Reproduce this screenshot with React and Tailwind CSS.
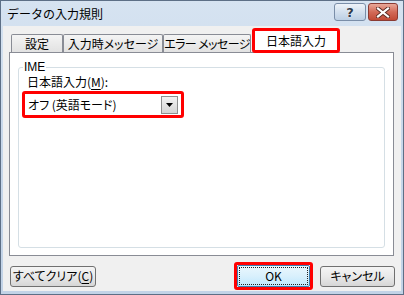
import React from "react";

const font = { fontFamily: '"Noto Sans CJK JP", "Noto Sans", sans-serif' };

function Tab({ w, children, extra = "" }) {
  return (
    <div
      className={`${w} h-[18px] border border-b-0 border-[#898c95] rounded-t-[2px] bg-gradient-to-b from-[#f4f4f4] to-[#e2e2e2] flex items-center justify-center text-[12px] leading-[14px] text-black whitespace-nowrap overflow-hidden [font-feature-settings:'palt'] ${extra}`}
    >
      {children}
    </div>
  );
}

function Btn({ w, children }) {
  return (
    <div
      className={`${w} h-[21px] border border-[#707070] rounded-[3px] bg-gradient-to-b from-[#f4f4f4] via-[#e9e9e9] to-[#d6d6d6] flex items-center justify-center text-[12px] leading-[14px] text-black whitespace-nowrap [font-feature-settings:'palt']`}
    >
      {children}
    </div>
  );
}

export default function App() {
  return (
    <div
      style={font}
      className="w-[404px] h-[295px] flex flex-col bg-gradient-to-b from-[#d6e3f1] via-[#c7d7ea] to-[#c2d3e7] border border-[#5d6f86] select-none"
    >
      {/* title bar */}
      <div className="h-[25px] flex items-center pl-[6px] shrink-0">
        <span className="text-[12px] leading-[14px] text-black whitespace-nowrap">データの入力規則</span>
        <div className="ml-auto mr-[5px] self-start mt-[2px] flex gap-[2px]">
          <div className="w-[32px] h-[18px] rounded-[3px] border border-[#7a8ea8] bg-gradient-to-b from-[#eef3f9] via-[#d3e0ee] to-[#bccfe4] flex items-center justify-center">
            <span
              className="text-[13px] leading-[13px] font-bold text-[#2e3a4b]"
              style={{ fontFamily: '"DejaVu Sans", sans-serif', textShadow: "0 0 1px #fff, 0 0 1px #fff" }}
            >
              ?
            </span>
          </div>
          <div className="w-[30px] h-[18px] rounded-[3px] border border-[#8a3b33] bg-gradient-to-b from-[#e9a899] via-[#d26a58] to-[#c14a36] flex items-center justify-center">
            <svg width="14" height="11" viewBox="0 0 14 11">
              <path d="M2 1.5 L12 9.5 M12 1.5 L2 9.5" stroke="#5a2a22" strokeWidth="4" strokeLinecap="square" />
              <path d="M2 1.5 L12 9.5 M12 1.5 L2 9.5" stroke="#ffffff" strokeWidth="2.2" strokeLinecap="square" />
            </svg>
          </div>
        </div>
      </div>

      {/* client */}
      <div className="flex-1 ml-[2px] mr-[2px] mb-[3px] bg-[#f0f0f0] flex flex-col">
        {/* tabs */}
        <div className="mt-[2px] h-[24px] flex items-end pl-[8px]">
          <Tab w="w-[52px]">設定</Tab>
          <Tab w="w-[100px]">入力時メッセージ</Tab>
          <Tab w="w-[88px]" extra="tracking-[-0.6px]">エラー メッセージ</Tab>
          <div className="relative z-10 ml-[1px] -mb-[1px] w-[88px] h-[25px] border-[3px] border-[#ff0000] rounded-[3px] bg-white flex items-center justify-center text-[12px] leading-[14px] text-black whitespace-nowrap">
            日本語入力
          </div>
        </div>

        {/* panel */}
        <div className="ml-[6px] w-[385px] h-[204px] bg-white border border-[#898c95] pt-[14px] px-[8px]">
          <div className="relative h-[181px] border border-[#d5dfe5] rounded-[3px] pl-[3px]">
            <span
              className="absolute left-[4px] -top-[7px] bg-white px-[1px] text-[12px] leading-[13px] text-black"
              style={{ fontFamily: '"Liberation Sans", sans-serif' }}
            >
              IME
            </span>
            <div className="mt-[7px] pl-[5px] text-[12px] leading-[14px] text-black whitespace-nowrap">
              日本語入力(<span className="underline underline-offset-2">M</span>):
            </div>
            <div className="mt-[2px] w-[162px] h-[27px] border-[3px] border-[#ff0000] rounded-[3px] bg-white flex items-center pl-[3px] pr-[3px]">
              <span className="text-[12px] leading-[14px] text-black whitespace-nowrap [font-feature-settings:'palt']">
                オフ (英語モード)
              </span>
              <div className="ml-auto w-[17px] h-[18px] border border-[#8e8f8f] bg-gradient-to-b from-[#f2f2f2] to-[#d4d4d4] flex items-center justify-center">
                <svg width="7" height="4" viewBox="0 0 7 4">
                  <path d="M0 0 H7 L3.5 4 Z" fill="#000" />
                </svg>
              </div>
            </div>
          </div>
        </div>

        {/* buttons */}
        <div className="mt-[6px] h-[28px] flex items-center pl-[7px] pr-[6px]">
          <Btn w="w-[86px]">
            すべてクリア(<span className="underline underline-offset-2">C</span>)
          </Btn>
          <div className="ml-auto w-[79px] h-[28px] border-[3px] border-[#ff0000] rounded-[3px] flex">
            <div className="flex-1 border border-[#3c7fb1] rounded-[2px] bg-gradient-to-b from-[#eaf6fd] via-[#d9f0fc] to-[#bee6fd] p-[1px]">
              <div className="w-full h-full border border-dotted border-[#222] flex items-center justify-center text-[12px] leading-[14px] text-black">
                OK
              </div>
            </div>
          </div>
          <div className="ml-[7px]">
            <Btn w="w-[75px]">キャンセル</Btn>
          </div>
        </div>
      </div>
    </div>
  );
}
